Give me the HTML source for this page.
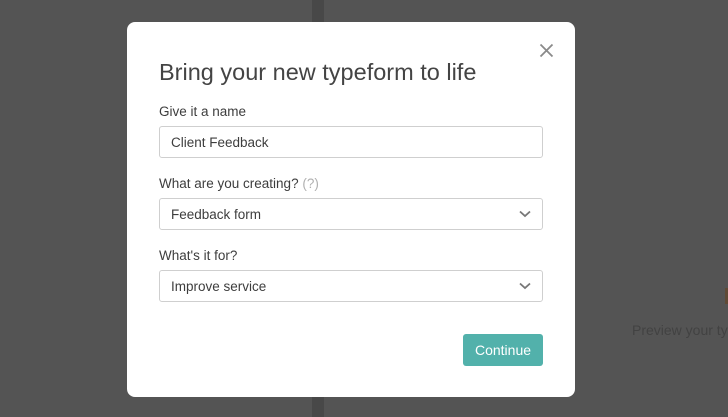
<!DOCTYPE html>
<html><head><meta charset="utf-8"><style>
*{margin:0;padding:0;box-sizing:border-box}
body{width:728px;height:417px;overflow:hidden;background:#545454;font-family:"Liberation Sans",sans-serif;position:relative}
.stripe{position:absolute;left:312px;top:0;width:12px;height:417px;background:#484848}
.clip{position:absolute;left:600px;top:300px;width:128px;height:60px;overflow:hidden}
.prev{position:absolute;left:32px;top:22px;font-size:14px;color:#424242;white-space:nowrap}
.mark{position:absolute;left:725px;top:288px;width:3px;height:16px;background:#5e4a36}
.modal{position:absolute;left:127px;top:22px;width:448px;height:375px;background:#fff;border-radius:8px}
.close{position:absolute;left:412px;top:21px}
h1{position:absolute;left:32px;top:36px;font-size:23.5px;font-weight:normal;color:#444;white-space:nowrap}
.lbl{position:absolute;left:32px;font-size:13.5px;color:#3d3d3d}
.lbl span{color:#b0b0b0}
.in{position:absolute;left:32px;width:384px;height:32px;border:1px solid #cfcfcf;border-radius:3px;font-size:13.5px;color:#3d3d3d;padding:8px 11px;line-height:15px}
.in svg{position:absolute;right:11px;top:11px}
.btn{position:absolute;left:336px;top:312px;width:80px;height:32px;background:#52b1ab;border-radius:3px;color:#fff;font-size:14px;text-align:center;line-height:32px}
</style></head><body>
<div class="stripe"></div>
<div class="clip"><div class="prev">Preview your typeform</div></div>
<div class="mark"></div>
<div class="modal">
<svg class="close" width="15" height="15" viewBox="0 0 15 15"><path d="M1.5 1.5L13.5 13.5M13.5 1.5L1.5 13.5" stroke="#8a8a8a" stroke-width="1.8"/></svg>
<h1 style="top:37px">Bring your new typeform to life</h1>
<div class="lbl" style="top:82px">Give it a name</div>
<div class="in" style="top:104px">Client Feedback</div>
<div class="lbl" style="top:154px">What are you creating? <span>(?)</span></div>
<div class="in" style="top:176px">Feedback form<svg width="12" height="8" viewBox="0 0 12 8"><path d="M1 1.5L6 6L11 1.5" stroke="#777" stroke-width="1.8" fill="none"/></svg></div>
<div class="lbl" style="top:226px">What's it for?</div>
<div class="in" style="top:248px">Improve service<svg width="12" height="8" viewBox="0 0 12 8"><path d="M1 1.5L6 6L11 1.5" stroke="#777" stroke-width="1.8" fill="none"/></svg></div>
<div class="btn">Continue</div>
</div>
</body></html>
